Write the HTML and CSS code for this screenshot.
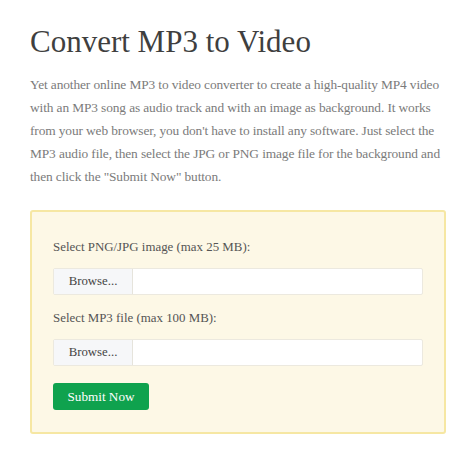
FILE: index.html
```html
<!DOCTYPE html>
<html lang="en">
<head>
<meta charset="utf-8">
<title>Convert MP3 to Video</title>
<link rel="stylesheet" href="styles.css">
</head>
<body>
<main class="page">
  <h1 class="title">Convert MP3 to Video</h1>
  <p class="intro">Yet another online MP3 to video converter to create a high-quality MP4 video with an MP3 song as audio track and with an image as background. It works from your web browser, you don't have to install any software. Just select the MP3 audio file, then select the JPG or PNG image file for the background and then click the "Submit Now" button.</p>
  <form class="panel">
    <label class="field-label">Select PNG/JPG image (max 25 MB):</label>
    <div class="file-input">
      <span class="browse">Browse...</span>
      <span class="file-name"></span>
    </div>
    <label class="field-label">Select MP3 file (max 100 MB):</label>
    <div class="file-input">
      <span class="browse">Browse...</span>
      <span class="file-name"></span>
    </div>
    <button type="button" class="submit">Submit Now</button>
  </form>
</main>
</body>
</html>
```

FILE: styles.css
```css
html, body {
  margin: 0;
  padding: 0;
  background: #ffffff;
}

.page {
  padding: 24px 28px 0 30px;
  font-family: "Liberation Serif", "DejaVu Serif", serif;
}

.title {
  margin: 0;
  font-size: 31px;
  line-height: 36px;
  font-weight: normal;
  color: #3f3f3f;
}

.intro {
  margin: 13px 0 22px;
  font-size: 13.4px;
  line-height: 23px;
  letter-spacing: -0.12px;
  color: #7b7b7b;
}

.panel {
  display: flex;
  flex-direction: column;
  align-items: flex-start;
  background: #fdf8e6;
  border: 2px solid #f6e7a3;
  border-radius: 3px;
  padding: 25px 21px 22px;
}

.field-label {
  font-size: 12.9px;
  line-height: 20px;
  color: #555555;
}

.file-input {
  display: flex;
  align-self: stretch;
  height: 27px;
  margin: 11px 0 13px;
  border: 1px solid #ece9df;
  border-radius: 2px;
  background: #ffffff;
  box-sizing: border-box;
}

.browse {
  display: flex;
  align-items: center;
  justify-content: center;
  width: 78px;
  background: #f6f7f9;
  border-right: 1px solid #e6e4dc;
  font-size: 12.8px;
  color: #444444;
}

.file-name {
  flex: 1;
}

.submit {
  margin-top: 4px;
  height: 27px;
  width: 96px;
  border: none;
  border-radius: 3px;
  background: #0fa24e;
  color: #ffffff;
  font-family: "Liberation Serif", "DejaVu Serif", serif;
  font-size: 13.2px;
  padding: 0;
}
```
